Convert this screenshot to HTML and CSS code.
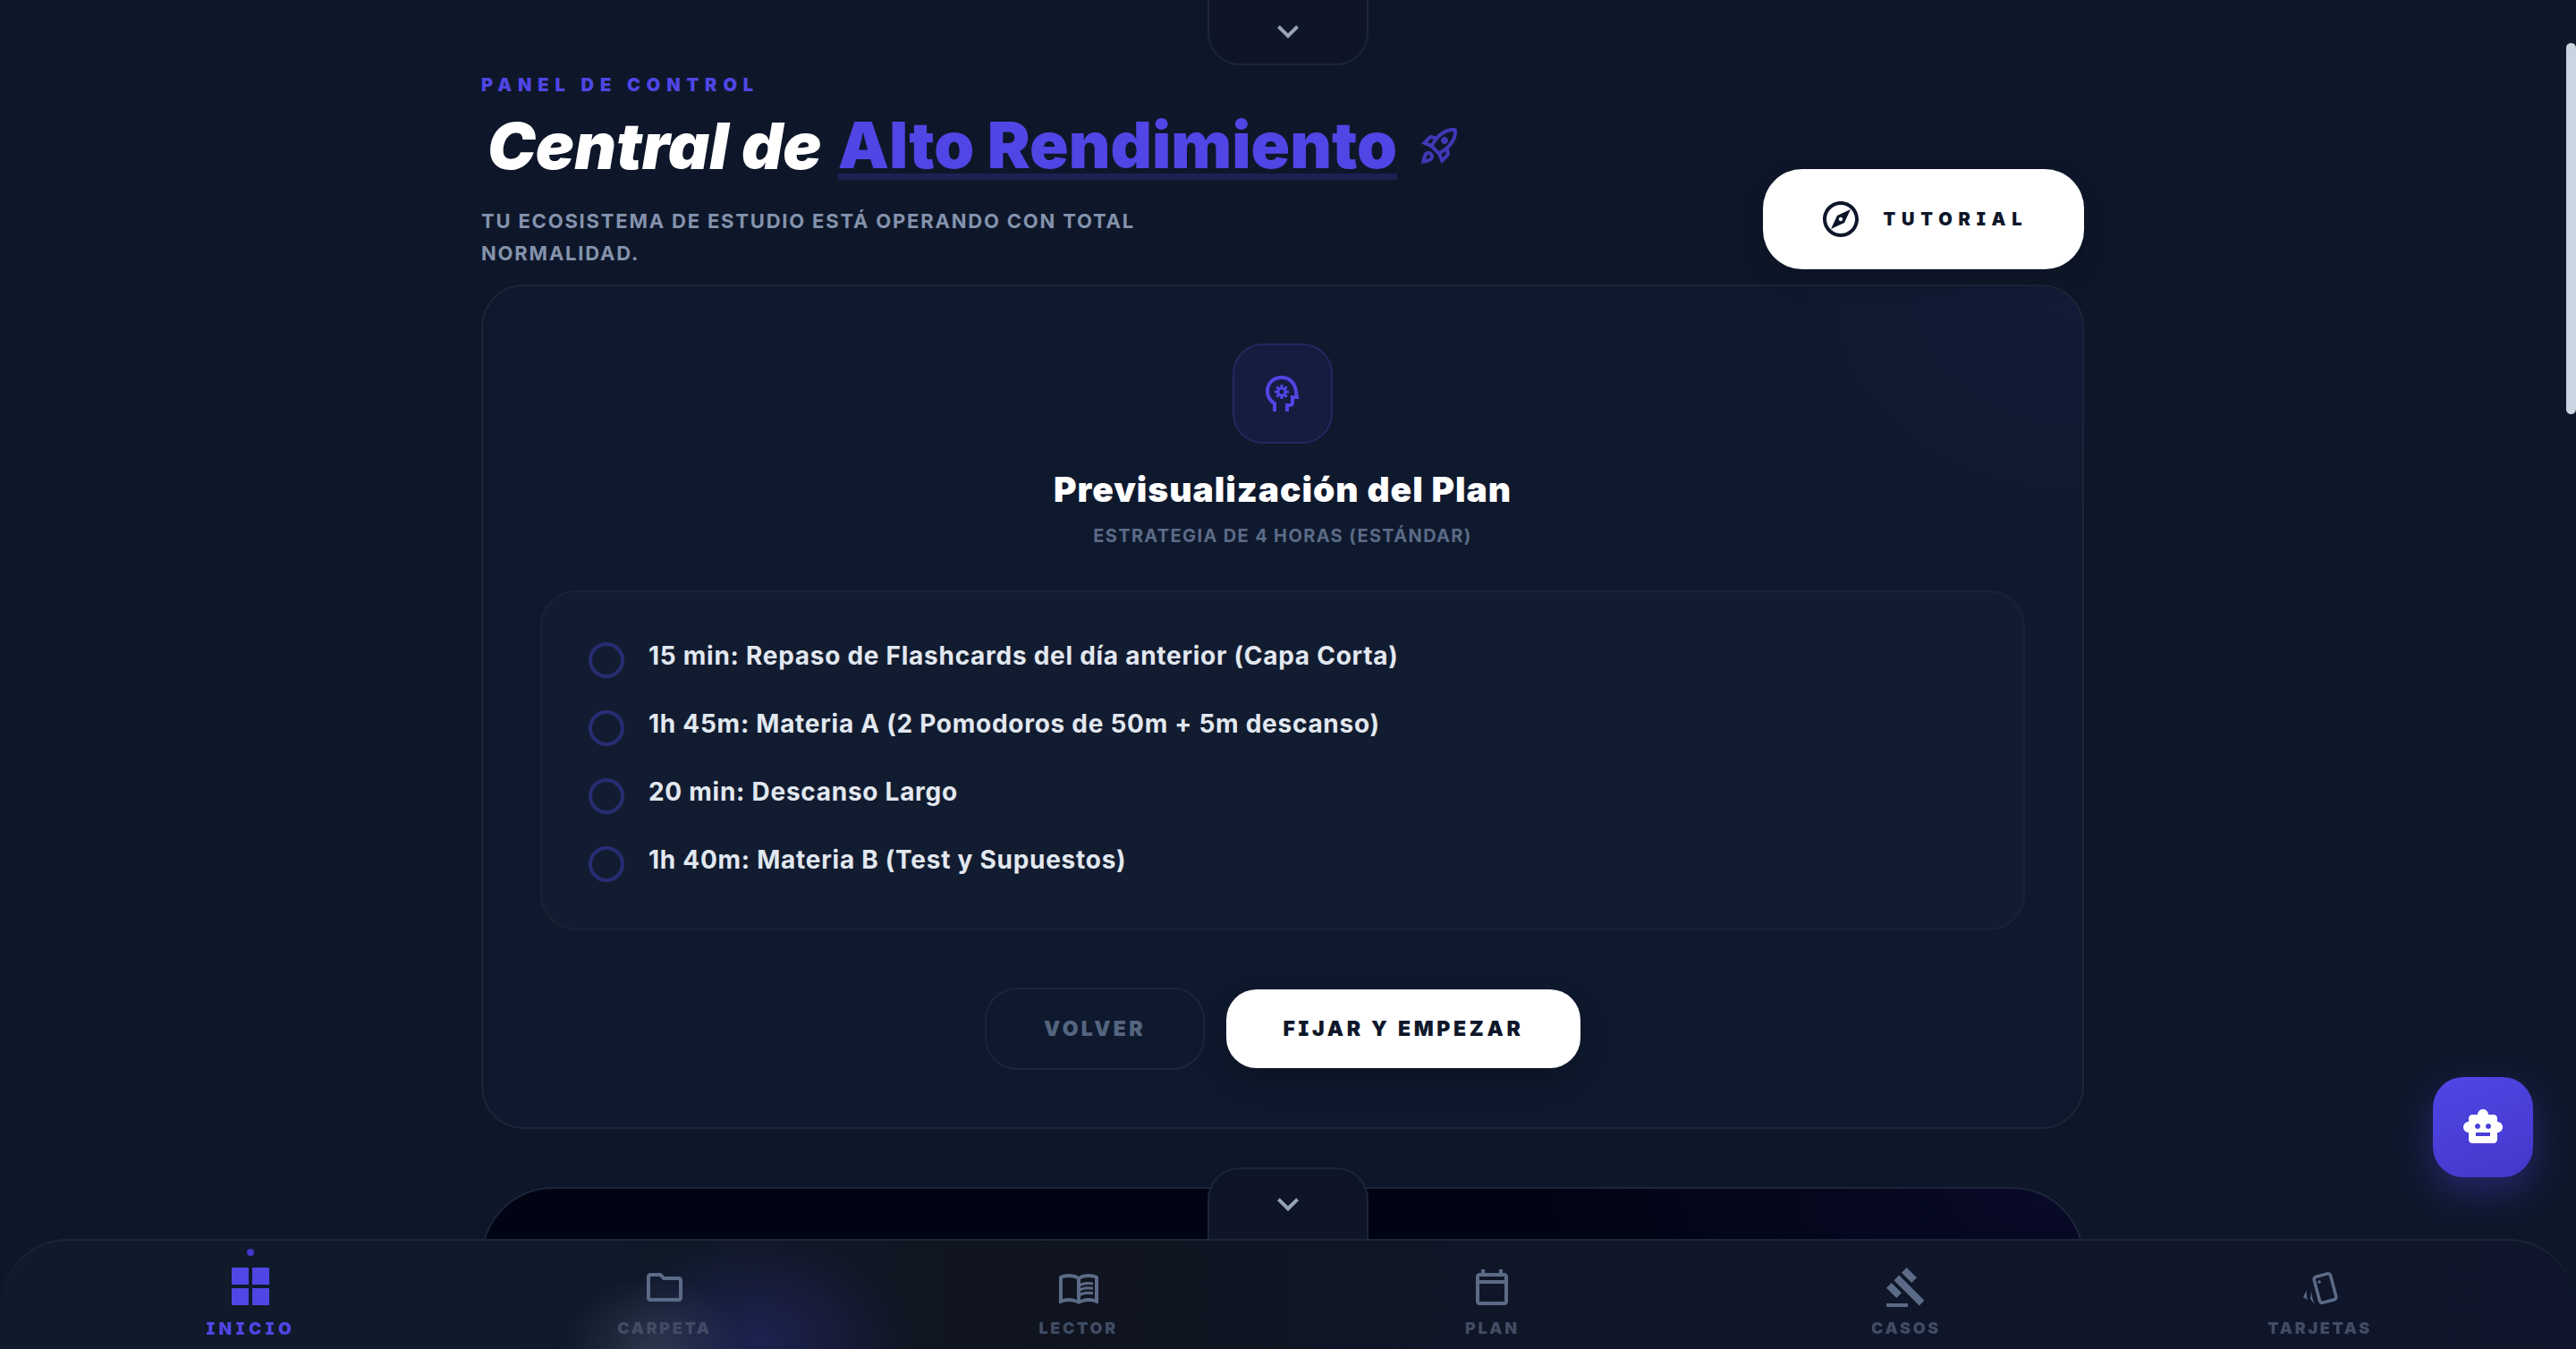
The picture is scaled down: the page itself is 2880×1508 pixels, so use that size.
FILE: index.html
```html
<!DOCTYPE html>
<html lang="es">
<head>
    <meta charset="UTF-8">
    <title>Central de Alto Rendimiento</title>
    <link rel="stylesheet" href="styles.css">
</head>
<body>
    <button class="scroll-tab scroll-tab-top" aria-label="Bajar">
        <svg viewBox="0 0 24 24" class="icon-48"><path d="M16.59 8.59L12 13.17 7.41 8.59 6 10l6 6 6-6z"/></svg>
    </button>

    <div class="page">
        <header class="header">
            <div class="header-text">
                <div class="eyebrow">PANEL DE CONTROL</div>
                <h1>
                    <em>Central de</em>
                    <span class="accent">Alto Rendimiento</span>
                    <svg class="rocket" viewBox="0 0 24 24"><path fill-rule="evenodd" d="M6 15c-.83 0-1.580.34-2.120.88C2.700 17.060 2 22 2 22s4.940-.7 6.120-1.880C8.660 19.580 9 18.830 9 18c0-1.660-1.340-3-3-3zm.71 3.710c-.28.28-2.170.76-2.170.76s.47-1.880.76-2.170c.17-.19.42-.3.7-.3.55 0 1 .45 1 1 0 .28-.11.53-.29.71zm10.710-5.060c6.360-6.360 4.240-11.310 4.240-11.310s-4.950-2.120-11.310 4.240l-2.490-.5c-.66-.13-1.340.08-1.820.55L2 10.690l5 2.140L11.170 17l2.140 5 4.050-4.050c.47-.47.68-1.150.55-1.810l-.49-2.490zM7.410 10.830l-1.910-.82 1.970-1.970 1.440.29c-.57.83-1.080 1.700-1.500 2.500zm6.580 7.670l-.82-1.910c.8-.42 1.670-.93 2.490-1.500l.29 1.440-1.960 1.970zM16 12.240c-1.320 1.320-3.380 2.400-4.040 2.730l-2.930-2.930c.32-.65 1.400-2.710 2.730-4.040 4.680-4.680 8.230-3.990 8.230-3.990s.69 3.550-3.990 8.230zM15 11c1.100 0 2-.9 2-2s-.9-2-2-2-2 .9-2 2 .9 2 2 2z"/></svg>
                </h1>
                <p class="subtitle">TU ECOSISTEMA DE ESTUDIO ESTÁ OPERANDO CON TOTAL NORMALIDAD.</p>
            </div>
            <button class="btn-tutorial">
                <svg viewBox="0 0 24 24" class="icon-48"><path d="M12 2C6.48 2 2 6.48 2 12s4.48 10 10 10 10-4.48 10-10S17.52 2 12 2zm0 18c-4.41 0-8-3.59-8-8s3.59-8 8-8 8 3.59 8 8-3.59 8-8 8zm-5.500-2.500l7.510-3.490L17.500 6.500 9.990 9.990 6.500 17.500zm5.500-6.600c.61 0 1.100.49 1.100 1.100s-.49 1.100-1.100 1.100-1.100-.49-1.100-1.100.49-1.100 1.100-1.100z"/></svg>
                <span>TUTORIAL</span>
            </button>
        </header>

        <section class="card">
            <div class="card-icon">
                <svg viewBox="0 0 38 40" class="head-icon">
                    <path d="M10 40V31C5 28 2 23 2 17C2 8 9 2 18 2C26 2 31 7 33 13L35 24H30V30Q30 33 27 33H24V40"/>
                    <circle cx="18" cy="18" r="4"/>
                    <path class="gear" d="M18 10V14M18 22V26M10 18H14M22 18H26M12.300 12.300L15.200 15.200M20.800 20.800L23.700 23.700M23.700 12.300L20.800 15.200M15.200 20.800L12.300 23.700"/>
                </svg>
            </div>
            <h2>Previsualización del Plan</h2>
            <div class="card-sub">ESTRATEGIA DE 4 HORAS (ESTÁNDAR)</div>

            <ul class="steps">
                <li><span class="check"></span>15 min: Repaso de Flashcards del día anterior (Capa Corta)</li>
                <li><span class="check"></span>1h 45m: Materia A (2 Pomodoros de 50m + 5m descanso)</li>
                <li><span class="check"></span>20 min: Descanso Largo</li>
                <li><span class="check"></span>1h 40m: Materia B (Test y Supuestos)</li>
            </ul>

            <div class="actions">
                <button class="btn-back">VOLVER</button>
                <button class="btn-start">FIJAR Y EMPEZAR</button>
            </div>
        </section>

        <section class="card-dark"></section>
    </div>

    <button class="scroll-tab scroll-tab-bottom" aria-label="Bajar">
        <svg viewBox="0 0 24 24" class="icon-48"><path d="M16.59 8.59L12 13.17 7.41 8.59 6 10l6 6 6-6z"/></svg>
    </button>

    <button class="fab" aria-label="Asistente">
        <svg viewBox="0 0 24 24" class="icon-48"><path d="M20 9V7c0-1.100-.9-2-2-2h-3c0-1.660-1.340-3-3-3S9 3.340 9 5H6c-1.100 0-2 .9-2 2v2c-1.660 0-3 1.340-3 3s1.340 3 3 3v4c0 1.100.9 2 2 2h12c1.100 0 2-.9 2-2v-4c1.660 0 3-1.340 3-3s-1.340-3-3-3zM7.500 11.500c0-.83.67-1.500 1.500-1.500s1.500.67 1.500 1.500S9.830 13 9 13s-1.500-.67-1.500-1.500zM16 17H8v-2h8v2zm-1-4c-.83 0-1.500-.67-1.500-1.500S14.170 10 15 10s1.500.67 1.500 1.500S15.830 13 15 13z"/></svg>
    </button>

    <nav class="bottom-nav">
        <a class="nav-item active">
            <span class="nav-dot"></span>
            <svg viewBox="0 0 42 42" class="nav-grid"><rect x="0" y="0" width="19" height="19"/><rect x="23" y="0" width="19" height="19"/><rect x="0" y="23" width="19" height="19"/><rect x="23" y="23" width="19" height="19"/></svg>
            <span class="nav-label">INICIO</span>
        </a>
        <a class="nav-item">
            <svg viewBox="0 0 24 24" class="icon-48"><path d="M9.170 6l2 2H20v10H4V6h5.170M10 4H4c-1.100 0-1.990.9-1.990 2L2 18c0 1.100.9 2 2 2h16c1.100 0 2-.9 2-2V8c0-1.100-.9-2-2-2h-8l-2-2z"/></svg>
            <span class="nav-label">CARPETA</span>
        </a>
        <a class="nav-item">
            <svg viewBox="0 0 24 24" class="icon-48"><path fill-rule="evenodd" d="M21 5c-1.110-.35-2.330-.5-3.500-.5-1.950 0-4.050.4-5.500 1.500-1.450-1.100-3.550-1.500-5.500-1.500S2.450 4.900 1 6v14.650c0 .25.25.5.5.5.1 0 .15-.05.25-.05C3.100 20.450 5.050 20 6.500 20c1.950 0 4.050.4 5.500 1.500 1.350-.85 3.800-1.500 5.500-1.500 1.650 0 3.350.3 4.750 1.050.1.05.15.05.25.05.25 0 .5-.25.5-.5V6c-.6-.45-1.250-.75-2-1zM3 18.500V7c1.100-.35 2.300-.5 3.500-.5 1.340 0 3.130.41 4.500.99v11.500C9.630 18.410 7.840 18 6.500 18c-1.200 0-2.400.15-3.500.5zm18 0c-1.100-.35-2.300-.5-3.500-.5-1.340 0-3.130.41-4.500.99V7.490c1.370-.59 3.160-.99 4.500-.99 1.200 0 2.400.15 3.500.5v11.500z"/><path d="M17.500 10.500c.88 0 1.730.09 2.500.26V9.240c-.79-.15-1.640-.24-2.500-.24-1.700 0-3.240.29-4.500.83v1.660c1.130-.64 2.700-.99 4.500-.99zM13 12.490v1.660c1.130-.64 2.700-.99 4.500-.99.88 0 1.730.09 2.500.26V11.900c-.79-.15-1.640-.24-2.500-.24-1.700 0-3.240.3-4.500.83zM17.500 14.330c-1.700 0-3.240.29-4.500.83v1.660c1.130-.64 2.700-.99 4.500-.99.88 0 1.730.09 2.500.26v-1.520c-.79-.16-1.640-.24-2.500-.24z"/></svg>
            <span class="nav-label">LECTOR</span>
        </a>
        <a class="nav-item">
            <svg viewBox="0 0 24 24" class="icon-48"><path d="M19 4h-1V2h-2v2H8V2H6v2H5c-1.110 0-2 .9-2 2v14c0 1.100.89 2 2 2h14c1.100 0 2-.9 2-2V6c0-1.100-.9-2-2-2zm0 16H5V10h14v10zm0-12H5V6h14v2z"/></svg>
            <span class="nav-label">PLAN</span>
        </a>
        <a class="nav-item">
            <svg viewBox="0 0 24 24" class="icon-48"><path d="M1 21h12v2H1v-2zM5.245 8.070l2.830-2.827 14.140 14.142-2.828 2.828L5.245 8.070zM12.317 1l5.657 5.656-2.830 2.830-5.654-5.660L12.317 1zM3.825 9.485l5.657 5.657-2.828 2.828-5.657-5.657 2.828-2.828z"/></svg>
            <span class="nav-label">CASOS</span>
        </a>
        <a class="nav-item">
            <svg viewBox="0 0 48 48" class="icon-48"><rect class="phone" x="20" y="10" width="19" height="30" rx="3" transform="rotate(-15 29.500 25)"/><circle cx="23" cy="18" r="1.800"/><path d="M9 27L5 35L10 38C8.500 34 8.500 31 9 27zM14 28L13 37L18 43C15.500 38 14.500 33 14 28z"/></svg>
            <span class="nav-label">TARJETAS</span>
        </a>
    </nav>

    <div class="scroll-thumb"></div>
</body>
</html>
```

FILE: styles.css
```css
:root {
    --bg: #0e172a;
    --indigo: #4f46e5;
    --line: #1b2638;
    --slate: #5b6b87;
}

* {
    margin: 0;
    padding: 0;
    box-sizing: border-box;
}

html, body {
    height: 100%;
    overflow: hidden;
}

body {
    background: var(--bg);
    color: #fff;
    font-family: 'Inter', sans-serif;
}

button {
    border: none;
    background: none;
    font-family: inherit;
    cursor: pointer;
}

.icon-48 {
    width: 48px;
    height: 48px;
    display: block;
    fill: currentColor;
    flex-shrink: 0;
}

.page {
    width: 1792px;
    margin-left: 538px;
    padding-top: 81px;
}

/* cabecera */
.header {
    display: flex;
    justify-content: space-between;
    align-items: flex-end;
    margin-bottom: 17px;
}

.eyebrow {
    color: var(--indigo);
    font-size: 20px;
    line-height: 28px;
    font-weight: 900;
    letter-spacing: 0.345em;
}

h1 {
    display: flex;
    align-items: center;
    font-size: 72px;
    line-height: 84px;
    font-weight: 900;
    margin-top: 12px;
    margin-bottom: 24px;
    white-space: nowrap;
}

h1 em {
    padding-left: 7px;
    margin-right: 18px;
}

.accent {
    color: var(--indigo);
    margin-top: 4px;
    line-height: 64px;
    border-bottom: 7px solid #1e2053;
}

.rocket {
    width: 48px;
    height: 48px;
    margin-left: 23px;
    fill: #3f39b8;
}

.subtitle {
    width: 760px;
    color: #8493ad;
    font-size: 22px;
    line-height: 36px;
    font-weight: 700;
    letter-spacing: 0.082em;
}

.btn-tutorial {
    width: 359px;
    height: 112px;
    display: flex;
    align-items: center;
    justify-content: center;
    gap: 24px;
    background: #fff;
    color: var(--bg);
    border-radius: 44px;
    font-size: 20px;
    font-weight: 900;
    font-feature-settings: "cv08";
    letter-spacing: 0.34em;
    box-shadow: 0 12px 30px rgba(0, 0, 0, 0.18);
}

/* tarjetas */
.card {
    border: 2px solid var(--line);
    border-radius: 48px;
    padding: 64px;
    height: 944px;
    background:
        radial-gradient(320px 260px at 100% 0, rgba(79, 70, 229, 0.05), transparent 100%),
        #0f192e;
}

.card-icon {
    width: 112px;
    height: 112px;
    margin: 0 auto;
    display: flex;
    align-items: center;
    justify-content: center;
    background: #151c40;
    border: 2px solid #23285f;
    border-radius: 34px;
}

.head-icon {
    width: 38px;
    height: 40px;
    fill: none;
    stroke: var(--indigo);
    stroke-width: 4;
}

.head-icon circle,
.head-icon .gear {
    stroke-width: 3;
}

h2 {
    margin-top: 26px;
    text-align: center;
    font-size: 39px;
    line-height: 50px;
    font-weight: 900;
    letter-spacing: 0.025em;
}

.card-sub {
    margin-top: 13px;
    text-align: center;
    color: var(--slate);
    font-size: 20px;
    line-height: 28px;
    font-weight: 700;
    letter-spacing: 0.0675em;
}

.steps {
    list-style: none;
    margin-top: 47px;
    display: flex;
    flex-direction: column;
    gap: 32px;
    padding: 52px;
    background: #121c30;
    border: 2px solid #192335;
    border-radius: 40px;
}

.steps li {
    display: flex;
    align-items: flex-start;
    gap: 27px;
    height: 44px;
    color: #e2e8f0;
    font-size: 28px;
    line-height: 38px;
    font-weight: 700;
    letter-spacing: 0.026em;
}

.check {
    width: 40px;
    height: 40px;
    margin-top: 4px;
    border: 4px solid #272d72;
    border-radius: 50%;
    flex-shrink: 0;
}

.actions {
    display: flex;
    justify-content: center;
    align-items: center;
    gap: 24px;
    margin-top: 64px;
}

.btn-back {
    width: 246px;
    height: 92px;
    border: 2px solid var(--line);
    border-radius: 36px;
    color: #54657f;
    font-size: 23px;
    font-weight: 900;
    letter-spacing: 0.145em;
}

.btn-start {
    width: 396px;
    height: 88px;
    background: #fff;
    color: var(--bg);
    border-radius: 34px;
    font-size: 23px;
    font-weight: 900;
    font-feature-settings: "cv08";
    letter-spacing: 0.16em;
    box-shadow: 0 14px 36px rgba(0, 0, 0, 0.2);
}

.card-dark {
    margin-top: 65px;
    height: 600px;
    border: 2px solid var(--line);
    border-radius: 80px;
    background:
        radial-gradient(600px 300px at 100% 0, rgba(79, 70, 229, 0.1), transparent 100%),
        #010413;
}

/* capas flotantes */
.scroll-tab {
    position: fixed;
    left: 1350px;
    width: 180px;
    display: flex;
    justify-content: center;
    color: #94a3b8;
    background: #0d1526;
    border: 2px solid var(--line);
}

.scroll-tab-top {
    top: -2px;
    height: 75px;
    padding-top: 11px;
    border-radius: 0 0 36px 36px;
}

.scroll-tab-bottom {
    top: 1305px;
    height: 90px;
    padding-top: 15px;
    border-radius: 36px 36px 0 0;
}

.fab {
    position: fixed;
    left: 2720px;
    top: 1204px;
    width: 112px;
    height: 112px;
    display: flex;
    align-items: center;
    justify-content: center;
    color: #fff;
    background: linear-gradient(160deg, #4f46e5, #4338ca);
    border-radius: 34px;
    box-shadow: 0 16px 40px rgba(79, 70, 229, 0.35);
}

.scroll-thumb {
    position: fixed;
    right: 0;
    top: 48px;
    width: 11px;
    height: 415px;
    background: #cbd5e1;
    border-radius: 6px;
}

.bottom-nav {
    position: fixed;
    left: 0;
    right: 0;
    top: 1385px;
    bottom: 0;
    padding: 0 55px 0 49px;
    display: grid;
    grid-template-columns: repeat(6, 1fr);
    border-top: 2px solid var(--line);
    border-radius: 76px 76px 0 0;
    background:
        radial-gradient(100px 85px at 730px 123px, rgba(120, 130, 150, 0.26), transparent 100%),
        radial-gradient(170px 120px at 850px 110px, rgba(79, 70, 229, 0.22), transparent 100%),
        linear-gradient(90deg, #0f1a2b 0, #0f1a2b 20%, #10141f 40%, #0f1628 60%, #0f162b 100%);
}

.nav-item {
    position: relative;
    display: flex;
    flex-direction: column;
    align-items: center;
    padding-top: 28px;
    color: var(--slate);
}

.nav-label {
    margin-top: 10px;
    color: #3f4c64;
    font-size: 18px;
    line-height: 24px;
    font-weight: 900;
    letter-spacing: 0.148em;
}

.nav-item.active {
    color: var(--indigo);
    padding-top: 30px;
}

.nav-item.active .nav-label {
    color: var(--indigo);
    margin-top: 15px;
    font-size: 19px;
    font-feature-settings: "cv08";
    letter-spacing: 0.24em;
}

.nav-grid {
    width: 42px;
    height: 42px;
    fill: currentColor;
}

.nav-dot {
    position: absolute;
    top: 9px;
    width: 8px;
    height: 8px;
    border-radius: 50%;
    background: #4338ca;
}

.phone {
    fill: none;
    stroke: currentColor;
    stroke-width: 3.5;
}
```
